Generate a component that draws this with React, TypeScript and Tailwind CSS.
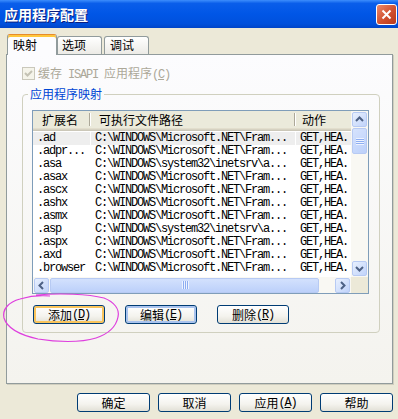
import React from 'react';

const zh = "font-['Noto_Sans_CJK_SC',sans-serif]";
const mono = "font-['Liberation_Mono',monospace] text-[12px] tracking-[-1.2px] whitespace-pre";

const ms = 'C:\\WINDOWS\\Microsoft.NET\\Fram...';
const sys = 'C:\\WINDOWS\\system32\\inetsrv\\a...';

const rows: [string, string][] = [
  ['.ad', ms],
  ['.adpr...', ms],
  ['.asa', sys],
  ['.asax', ms],
  ['.ascx', ms],
  ['.ashx', ms],
  ['.asmx', ms],
  ['.asp', sys],
  ['.aspx', ms],
  ['.axd', ms],
  ['.browser', ms],
];

const Ascii = ({ children }: { children: React.ReactNode }) => <span className={mono}>{children}</span>;

const arrows = {
  up: 'M3 8 L6.5 4.5 L10 8',
  down: 'M3 5 L6.5 8.5 L10 5',
  left: 'M8 3 L4.5 6.5 L8 10',
  right: 'M5 3 L8.5 6.5 L5 10',
};

const ScrollBtn = ({ dir }: { dir: keyof typeof arrows }) => (
  <div className="flex h-[15px] w-[15px] shrink-0 items-center justify-center rounded-[2px] border border-[#B7CAF3] bg-[linear-gradient(135deg,#E8F0FE,#C0D3FA)]">
    <svg width="13" height="13" viewBox="0 0 13 13">
      <path d={arrows[dir]} fill="none" stroke="#4D6185" strokeWidth="2" />
    </svg>
  </div>
);

const Button = ({ children, variant }: { children: React.ReactNode; variant?: 'hover' | 'focus' }) => {
  let ring = '';
  if (variant === 'hover') ring = 'shadow-[inset_0_0_0_2px_#F9C45C]';
  if (variant === 'focus') ring = 'shadow-[inset_0_0_0_2px_#A9C3EE]';
  return (
    <div
      className={`flex h-[19px] shrink-0 items-center justify-center rounded-[3px] border border-[#003C74] bg-[linear-gradient(to_bottom,#FFFFFF,#F4F3EE_60%,#E2E0D6)] text-[12px] leading-none text-black ${ring}`}
    >
      {children}
    </div>
  );
};

export default function App() {
  return (
    <div className={`relative h-[419px] w-[398px] overflow-hidden bg-[#ECE9D8] text-[12px] text-black ${zh}`}>
      {/* title bar */}
      <div className="flex h-[28px] items-center justify-between bg-[linear-gradient(to_bottom,#3D8EFC_0%,#0A5EEA_12%,#0056E6_50%,#0050DC_85%,#0045C8_100%)] pl-[4px] pr-[1px]">
        <span className="text-[14px] font-bold leading-none text-white [text-shadow:1px_1px_0_#0A1E80]">应用程序配置</span>
        <div className="flex h-[21px] w-[21px] items-center justify-center rounded-[3px] border border-white bg-[linear-gradient(135deg,#EC8A6C,#D0502F_55%,#B8391B)]">
          <svg width="13" height="13" viewBox="0 0 13 13">
            <path d="M2.5 2.5 L10.5 10.5 M10.5 2.5 L2.5 10.5" stroke="white" strokeWidth="2" />
          </svg>
        </div>
      </div>

      {/* tabs */}
      <div className="relative z-10 mt-[6px] flex h-[21px] items-end pl-[7px]">
        <div className="h-[21px] w-[50px] rounded-t-[3px] border-x border-t border-[#919B9C] border-t-[#E68B2C] bg-[#FCFCFE] pl-[5px] pt-[3px] leading-[14px] shadow-[inset_0_2px_0_#FFC73C]">
          映射
        </div>
        <div className="mb-[1px] h-[18px] w-[45px] rounded-t-[3px] border-x border-t border-[#919B9C] bg-[linear-gradient(to_bottom,#FFFFFF,#ECEBE6)] pl-[4px] pt-[1px] leading-[14px]">
          选项
        </div>
        <div className="mb-[1px] ml-[2px] h-[18px] w-[45px] rounded-t-[3px] border-x border-t border-[#919B9C] bg-[linear-gradient(to_bottom,#FFFFFF,#ECEBE6)] pl-[5px] pt-[1px] leading-[14px]">
          调试
        </div>
      </div>

      {/* tab page */}
      <div className="-mt-[1px] ml-[6px] h-[330px] w-[387px] border border-[#919B9C] bg-[linear-gradient(to_bottom,#FCFCFE,#F4F3EE)] pl-[15px] pt-[12px] shadow-[1px_1px_0_#D0CEBF]">
        <div className="flex h-[13px] items-center gap-[3px]">
          <div className="flex h-[13px] w-[13px] items-center justify-center border border-[#CAC8BB] bg-[#F5F4EA]">
            <svg width="11" height="11" viewBox="0 0 11 11">
              <path d="M2 5 L4.5 7.5 L9 3" fill="none" stroke="#C4C2B4" strokeWidth="2" />
            </svg>
          </div>
          <span className="leading-[13px] text-[#ACA899]">
            缓存<Ascii> ISAPI </Ascii>应用程序<Ascii>(<u>C</u>)</Ascii>
          </span>
        </div>

        {/* group box */}
        <div className="relative mt-[14px] w-[358px] rounded-[4px] border border-[#D0D0BF] pb-[8px] pl-[9px] pt-[15px]">
          <span className="absolute left-[5px] top-[-9px] bg-[#FBFBFB] px-[2px] leading-[16px] text-[#0046D5]">应用程序映射</span>

          {/* list view */}
          <div className="flex h-[184px] w-[337px] flex-col border border-[#7F9DB9] bg-white">
            <div className="flex h-[166px]">
              <div className="w-[318px] overflow-hidden">
                <div className="flex h-[20px] items-center bg-[#EBEADB] pb-[3px] shadow-[inset_0_-1px_0_#CBC7B8,inset_0_-2px_0_#D6D2C2,inset_0_-3px_0_#E2DECD]">
                  <div className="flex h-full w-[58px] shrink-0 items-center pl-[9px]">
                    <span>扩展名</span>
                    <span className="ml-auto h-[13px] w-[2px] border-l border-r border-l-[#ACA899] border-r-white" />
                  </div>
                  <div className="flex h-full w-[205px] shrink-0 items-center pl-[8px]">
                    <span>可执行文件路径</span>
                    <span className="ml-auto h-[13px] w-[2px] border-l border-r border-l-[#ACA899] border-r-white" />
                  </div>
                  <div className="flex h-full flex-1 items-center pl-[6px]">
                    <span>动作</span>
                  </div>
                </div>
                <div className="pt-[1px]">
                  {rows.map(([ext, path], i) => (
                    <div key={ext} className={`flex h-[13px] leading-[13px] ${i === 0 ? 'bg-[#EEEEEE]' : ''}`}>
                      <div className={`w-[58px] shrink-0 overflow-hidden border-r border-white pl-[4px] ${mono}`}>{ext}</div>
                      <div className={`w-[205px] shrink-0 overflow-hidden border-r border-white pl-[4px] ${mono}`}>{path}</div>
                      <div className={`flex-1 overflow-hidden pl-[4px] ${mono}`}>GET,HEA.</div>
                    </div>
                  ))}
                </div>
              </div>
              {/* vertical scrollbar */}
              <div className="flex w-[17px] flex-col items-center bg-[#F9F8F3] py-[1px]">
                <ScrollBtn dir="up" />
                <div className="mt-[1px] flex h-[26px] w-[15px] items-center justify-center rounded-[2px] border border-[#B7CAF3] bg-[linear-gradient(135deg,#D6E3FD,#BCD0FA)]">
                  <svg width="8" height="8" viewBox="0 0 8 8">
                    <path d="M0 1.5 H8 M0 3.5 H8 M0 5.5 H8 M0 7.5 H8" stroke="#EEF3FE" strokeWidth="1" />
                    <path d="M0 2.5 H8 M0 4.5 H8 M0 6.5 H8" stroke="#8DAEF2" strokeWidth="1" />
                  </svg>
                </div>
                <div className="flex-1" />
                <ScrollBtn dir="down" />
              </div>
            </div>
            {/* horizontal scrollbar */}
            <div className="flex h-[16px]">
              <div className="flex w-[318px] items-center gap-[1px] bg-[#F9F8F3] px-[1px]">
                <ScrollBtn dir="left" />
                <div className="flex h-[15px] w-[269px] items-center justify-center rounded-[2px] border border-[#B7CAF3] bg-[linear-gradient(to_bottom,#D3E1FD,#BCD0FA)]">
                  <svg width="8" height="8" viewBox="0 0 8 8">
                    <path d="M1.5 0 V8 M3.5 0 V8 M5.5 0 V8 M7.5 0 V8" stroke="#EEF3FE" strokeWidth="1" />
                    <path d="M2.5 0 V8 M4.5 0 V8 M6.5 0 V8" stroke="#8DAEF2" strokeWidth="1" />
                  </svg>
                </div>
                <div className="flex-1" />
                <ScrollBtn dir="right" />
              </div>
              <div className="w-[17px] bg-[#ECE9D8]" />
            </div>
          </div>

          <div className="ml-[1px] mt-[11px] flex gap-[20px]">
            <div className="w-[72px]">
              <Button variant="hover">
                添加<Ascii>(<u>D</u>)</Ascii>
              </Button>
            </div>
            <div className="w-[72px]">
              <Button variant="focus">
                编辑<Ascii>(<u>E</u>)</Ascii>
              </Button>
            </div>
            <div className="w-[72px]">
              <Button>
                删除<Ascii>(<u>R</u>)</Ascii>
              </Button>
            </div>
          </div>
        </div>
      </div>

      {/* dialog buttons */}
      <div className="mt-[9px] flex justify-end gap-[8px] pr-[5px]">
        <div className="w-[73px]">
          <Button>确定</Button>
        </div>
        <div className="w-[73px]">
          <Button>取消</Button>
        </div>
        <div className="w-[73px]">
          <Button>
            应用<Ascii>(<u>A</u>)</Ascii>
          </Button>
        </div>
        <div className="w-[73px]">
          <Button>帮助</Button>
        </div>
      </div>

      {/* hand-drawn annotation */}
      <svg className="pointer-events-none absolute left-0 top-0" width="398" height="419" viewBox="0 0 398 419">
        <path
          d="M36 295 C60 293 88 294 104 298 C114 302 120 309 118 317 C116 327 108 334 96 338 C80 343 56 342 38 339 C20 335 7 328 4 318 C2 309 9 302 20 299 C30 296 40 295 50 296"
          fill="none"
          stroke="#DE3FDE"
          strokeWidth="1.2"
        />
      </svg>
    </div>
  );
}
